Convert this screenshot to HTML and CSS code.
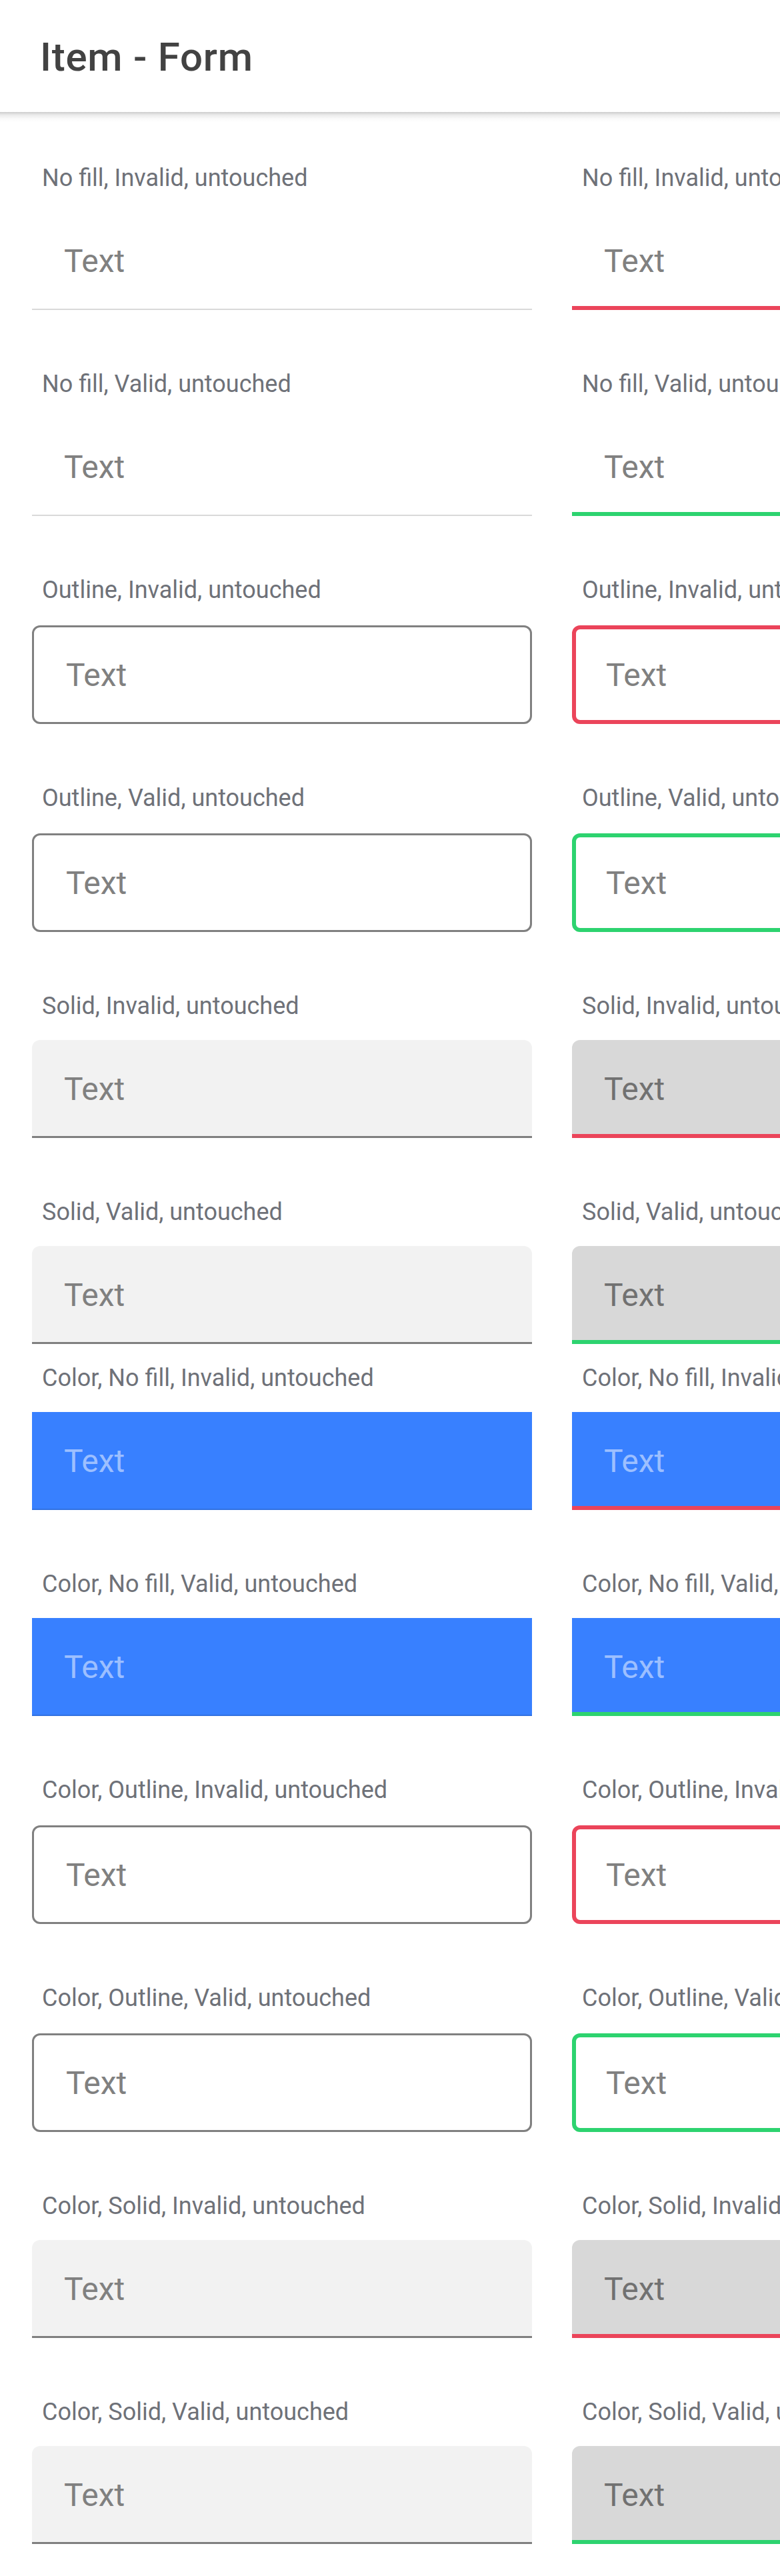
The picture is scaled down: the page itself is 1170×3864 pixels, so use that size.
FILE: index.html
```html
<!DOCTYPE html>
<html lang="en">
<head>
<meta charset="utf-8">
<title>Item - Form</title>
<link rel="stylesheet" href="styles.css">
</head>
<body>
<header class="toolbar"><h1 class="title">Item - Form</h1></header>
<main class="content">
  <section class="grid">
    <div class="field"><div class="label">No fill, Invalid, untouched</div><div class="box nofill"><span>Text</span></div></div>
    <div class="field"><div class="label">No fill, Invalid, untouched</div><div class="box nofill invalid"><span>Text</span></div></div>
    <div class="field"><div class="label">No fill, Valid, untouched</div><div class="box nofill"><span>Text</span></div></div>
    <div class="field"><div class="label">No fill, Valid, untouched</div><div class="box nofill valid"><span>Text</span></div></div>
    <div class="field"><div class="label">Outline, Invalid, untouched</div><div class="box outline"><span>Text</span></div></div>
    <div class="field"><div class="label">Outline, Invalid, untouched</div><div class="box outline invalid"><span>Text</span></div></div>
    <div class="field"><div class="label">Outline, Valid, untouched</div><div class="box outline"><span>Text</span></div></div>
    <div class="field"><div class="label">Outline, Valid, untouched</div><div class="box outline valid"><span>Text</span></div></div>
    <div class="field"><div class="label">Solid, Invalid, untouched</div><div class="box solid"><span>Text</span></div></div>
    <div class="field"><div class="label">Solid, Invalid, untouched</div><div class="box solid invalid"><span>Text</span></div></div>
    <div class="field"><div class="label">Solid, Valid, untouched</div><div class="box solid"><span>Text</span></div></div>
    <div class="field"><div class="label">Solid, Valid, untouched</div><div class="box solid valid"><span>Text</span></div></div>
  </section>
  <section class="grid">
    <div class="field"><div class="label">Color, No fill, Invalid, untouched</div><div class="box color"><span>Text</span></div></div>
    <div class="field"><div class="label">Color, No fill, Invalid, untouched</div><div class="box color invalid"><span>Text</span></div></div>
    <div class="field"><div class="label">Color, No fill, Valid, untouched</div><div class="box color"><span>Text</span></div></div>
    <div class="field"><div class="label">Color, No fill, Valid, untouched</div><div class="box color valid"><span>Text</span></div></div>
    <div class="field"><div class="label">Color, Outline, Invalid, untouched</div><div class="box outline"><span>Text</span></div></div>
    <div class="field"><div class="label">Color, Outline, Invalid, untouched</div><div class="box outline invalid"><span>Text</span></div></div>
    <div class="field"><div class="label">Color, Outline, Valid, untouched</div><div class="box outline"><span>Text</span></div></div>
    <div class="field"><div class="label">Color, Outline, Valid, untouched</div><div class="box outline valid"><span>Text</span></div></div>
    <div class="field"><div class="label">Color, Solid, Invalid, untouched</div><div class="box solid"><span>Text</span></div></div>
    <div class="field"><div class="label">Color, Solid, Invalid, untouched</div><div class="box solid invalid"><span>Text</span></div></div>
    <div class="field"><div class="label">Color, Solid, Valid, untouched</div><div class="box solid"><span>Text</span></div></div>
    <div class="field"><div class="label">Color, Solid, Valid, untouched</div><div class="box solid valid"><span>Text</span></div></div>
  </section>
</main>
</body>
</html>
```

FILE: styles.css
```css
* {
  box-sizing: border-box;
}

html,
body {
  margin: 0;
  padding: 0;
  background: #ffffff;
}

body {
  font-family: Roboto, "Noto Sans", "Liberation Sans", sans-serif;
  width: 1170px;
  overflow-x: hidden;
}

.toolbar {
  position: relative;
  z-index: 2;
  height: 168px;
  display: flex;
  align-items: center;
  padding: 3px 0 0 60px;
  background: #ffffff;
}

.toolbar::after {
  content: "";
  position: absolute;
  left: 0;
  right: 0;
  top: 100%;
  height: 15px;
  background: linear-gradient(to bottom, rgba(0, 0, 0, 0.2) 0, rgba(0, 0, 0, 0.08) 30%, rgba(0, 0, 0, 0.02) 70%, rgba(0, 0, 0, 0) 100%);
}

.title {
  margin: 0;
  font-size: 60px;
  line-height: 60px;
  font-weight: 500;
  letter-spacing: 0.75px;
  color: #424242;
}

.content {
  padding: 48px 0 48px 48px;
  overflow: hidden;
}

.grid {
  display: grid;
  grid-template-columns: 750px 750px;
  column-gap: 60px;
  row-gap: 60px;
}

.field {
  display: flex;
  flex-direction: column;
  padding-top: 30px;
}

.label {
  font-size: 36px;
  line-height: 42px;
  color: #6e7178;
  padding-left: 15px;
  margin-bottom: 30px;
  white-space: nowrap;
}

.box {
  height: 147px;
  display: flex;
  align-items: center;
  padding-left: 48px;
  font-size: 48px;
  color: #808080;
  white-space: nowrap;
}

/* No fill */
.nofill {
  box-shadow: inset 0 -2px 0 #d9d9d9;
}

.nofill.invalid {
  box-shadow: inset 0 -6px 0 #eb445a;
}

.nofill.valid {
  box-shadow: inset 0 -6px 0 #2dd36f;
}

/* Outline */
.outline {
  height: 148px;
  margin-top: 2px;
  border: 3px solid #808080;
  border-radius: 12px;
}

.outline.invalid {
  border: 6px solid #eb445a;
  padding-left: 45px;
}

.outline.valid {
  border: 6px solid #2dd36f;
  padding-left: 45px;
}

/* Solid */
.solid {
  background: #f2f2f2;
  border-radius: 12px 12px 0 0;
  box-shadow: inset 0 -3px 0 #808080;
}

.solid.invalid,
.solid.valid {
  background: #d8d8d8;
  color: #717171;
}

.solid.invalid {
  box-shadow: inset 0 -6px 0 #eb445a;
}

.solid.valid {
  box-shadow: inset 0 -6px 0 #2dd36f;
}

/* Color, no fill */
.color {
  background: #3880ff;
  color: #9cbfff;
  box-shadow: inset 0 -2px 0 #3171e0;
}

.color.invalid {
  box-shadow: inset 0 -6px 0 #eb445a;
}

.color.valid {
  box-shadow: inset 0 -6px 0 #2dd36f;
}
```
